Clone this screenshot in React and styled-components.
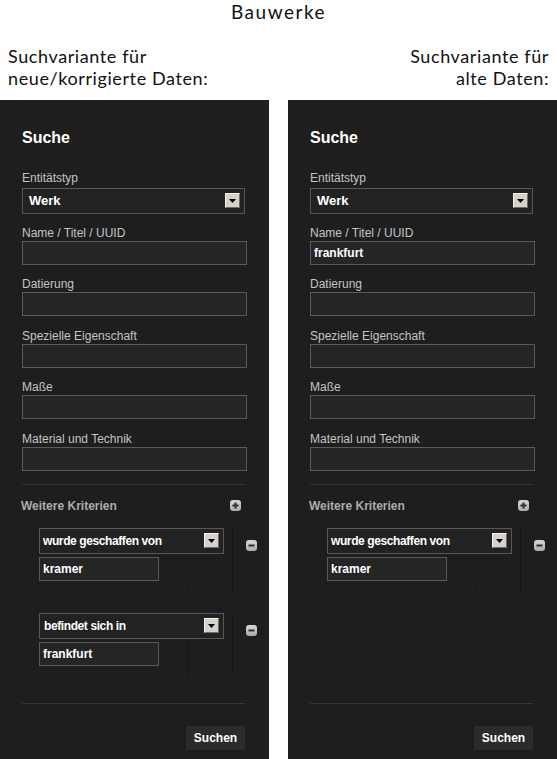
import React from "react";
import styled, { createGlobalStyle } from "styled-components";

const GlobalStyle = createGlobalStyle`
  html, body {
    margin: 0;
    padding: 0;
    background: #ffffff;
  }
  body {
    font-family: "Liberation Sans", Arial, sans-serif;
    overflow: hidden;
  }
`;

const Page = styled.div`
  width: 557px;
  height: 759px;
  display: flex;
  flex-direction: column;
`;

const Header = styled.header`
  height: 100px;
  display: flex;
  flex-direction: column;
  font-family: Lato, "DejaVu Sans", sans-serif;
  color: #111;
`;

const Title = styled.h1`
  margin: 1px 0 0;
  font-size: 19px;
  font-weight: 400;
  line-height: 22px;
  letter-spacing: 1.5px;
  text-align: center;
`;

const Intro = styled.div`
  display: flex;
  justify-content: space-between;
  margin-top: 22px;
  padding: 0 8px 0 8px;
`;

const IntroText = styled.p`
  margin: 0;
  font-size: 18px;
  line-height: 22px;
  letter-spacing: 0.6px;
  text-align: ${(p) => (p.$right ? "right" : "left")};
`;

const Panels = styled.div`
  display: grid;
  grid-template-columns: 269px 269px;
  column-gap: 19px;
  flex: 1;
`;

const Panel = styled.section`
  background: #1e1e1e;
  padding: 29px 24px 0 22px;
  display: flex;
  flex-direction: column;
`;

const Heading = styled.h2`
  margin: 0;
  font-size: 16px;
  font-weight: 700;
  line-height: 18px;
  color: #ffffff;
`;

const Field = styled.div`
  display: flex;
  flex-direction: column;
  margin-top: ${(p) => p.$gap || "12px"};
`;

const Label = styled.label`
  font-size: 12px;
  line-height: 15px;
  color: #c4c4c4;
`;

const SelectBox = styled.div`
  box-sizing: border-box;
  width: ${(p) => p.$width}px;
  height: 26px;
  flex: none;
  margin-top: ${(p) => p.$top || 0}px;
  border: 1px solid #575757;
  background: #222222;
  display: flex;
  align-items: center;
  justify-content: space-between;
  padding: 0 4px 0 ${(p) => p.$pad}px;
  color: #ffffff;
  font-size: ${(p) => p.$size}px;
  font-weight: 700;
  letter-spacing: ${(p) => p.$spacing || 0}px;
`;

const ArrowButton = styled.span`
  box-sizing: border-box;
  width: 15px;
  height: 15px;
  background: #d6d2ca;
  border-top: 1px solid #f4f2ee;
  border-left: 1px solid #f4f2ee;
  border-right: 1px solid #6f6d69;
  border-bottom: 1px solid #6f6d69;
  display: flex;
  align-items: center;
  justify-content: center;
`;

const TextInput = styled.div`
  box-sizing: border-box;
  width: ${(p) => p.$width}px;
  height: 24px;
  flex: none;
  border: 1px solid #5a5a5a;
  background: #252525;
  padding: 1px 3px 0;
  display: flex;
  align-items: center;
  color: #ffffff;
  font-size: 12px;
  font-weight: 700;
`;

const Dotted = styled.div`
  width: 223px;
  margin-top: ${(p) => p.$top}px;
  border-top: 1px dotted #4a4a4a;
`;

const MoreRow = styled.div`
  display: flex;
  align-items: center;
  justify-content: space-between;
  margin: 14px 4px 0 -1px;
`;

const MoreTitle = styled.span`
  font-size: 12px;
  font-weight: 700;
  line-height: 14px;
  color: #acacac;
`;

const CriteriaList = styled.div`
  height: 175px;
  margin-top: 15px;
  padding-left: 17px;
  display: flex;
  flex-direction: column;
  gap: 23px;
`;

const Criterion = styled.div`
  display: flex;
  height: 62px;
`;

const CriterionFields = styled.div`
  flex: none;
  width: 193px;
  border-right: 1px solid #131313;
  display: flex;
  flex-direction: column;
  gap: 3px;
`;

const InputRow = styled.div`
  display: flex;
  align-items: flex-start;
`;

const Trail = styled.span`
  flex: none;
  width: 29px;
  height: ${(p) => p.$height}px;
  margin-top: ${(p) => p.$top}px;
  border-right: 1px solid #151515;
`;

const RemoveSlot = styled.div`
  flex: none;
  padding: 9px 0 0 13px;
`;

const Footer = styled.div`
  display: flex;
  justify-content: flex-end;
  margin-top: 22px;
`;

const SearchButton = styled.button`
  width: 59px;
  height: 24px;
  border: 0;
  padding: 1px 0 0;
  background: #2b2b2b;
  color: #ffffff;
  font-family: "Liberation Sans", Arial, sans-serif;
  font-size: 12px;
  font-weight: 700;
`;

function Arrow() {
  return (
    <ArrowButton>
      <svg width="7" height="4" viewBox="0 0 7 4">
        <path d="M0 0h7L3.5 4z" fill="#000" />
      </svg>
    </ArrowButton>
  );
}

function RoundIcon({ plus }) {
  const id = plus ? "gp" : "gm";
  return (
    <svg width="11" height="11" viewBox="0 0 11 11">
      <defs>
        <linearGradient id={id} x1="0" y1="0" x2="0" y2="1">
          <stop offset="0" stopColor="#d8d8d8" />
          <stop offset="1" stopColor="#a9a9a9" />
        </linearGradient>
      </defs>
      <rect x="0" y="0" width="11" height="11" rx="3" fill={`url(#${id})`} />
      <rect x="2.5" y="4.5" width="6" height="2" fill="#2e2e2e" />
      {plus && <rect x="4.5" y="2.5" width="2" height="6" fill="#2e2e2e" />}
    </svg>
  );
}

const fields = [
  "Name / Titel / UUID",
  "Datierung",
  "Spezielle Eigenschaft",
  "Maße",
  "Material und Technik",
];

function SearchPanel({ nameValue, criteria }) {
  return (
    <Panel>
      <Heading>Suche</Heading>
      <Field $gap="23.5px">
        <Label>Entitätstyp</Label>
        <SelectBox $width={223} $pad={6} $size={13} $top={2}>
          <span>Werk</span>
          <Arrow />
        </SelectBox>
      </Field>
      {fields.map((f, i) => (
        <Field key={f} $gap={i === 0 ? "12px" : "12.5px"}>
          <Label>{f}</Label>
          <TextInput $width={225}>{i === 0 ? nameValue : ""}</TextInput>
        </Field>
      ))}
      <Dotted $top={13} />
      <MoreRow>
        <MoreTitle>Weitere Kriterien</MoreTitle>
        <RoundIcon plus />
      </MoreRow>
      <CriteriaList>
        {criteria.map((c) => (
          <Criterion key={c.relation}>
            <CriterionFields>
              <SelectBox $width={185} $pad={c.pad} $size={12} $spacing={-0.4}>
                <span>{c.relation}</span>
                <Arrow />
              </SelectBox>
              <InputRow>
                <TextInput $width={120}>{c.value}</TextInput>
                <Trail $top={c.trailTop} $height={c.trailHeight} />
              </InputRow>
            </CriterionFields>
            <RemoveSlot>
              <RoundIcon />
            </RemoveSlot>
          </Criterion>
        ))}
      </CriteriaList>
      <Dotted $top={0} />
      <Footer>
        <SearchButton>Suchen</SearchButton>
      </Footer>
    </Panel>
  );
}

const first = {
  relation: "wurde geschaffen von",
  value: "kramer",
  pad: 3,
  trailTop: 31,
  trailHeight: 4,
};

const second = {
  relation: "befindet sich in",
  value: "frankfurt",
  pad: 4,
  trailTop: -2,
  trailHeight: 37,
};

export default function App() {
  return (
    <Page>
      <GlobalStyle />
      <Header>
        <Title>Bauwerke</Title>
        <Intro>
          <IntroText>
            Suchvariante für
            <br />
            neue/korrigierte Daten:
          </IntroText>
          <IntroText $right>
            Suchvariante für
            <br />
            alte Daten:
          </IntroText>
        </Intro>
      </Header>
      <Panels>
        <SearchPanel nameValue="" criteria={[first, second]} />
        <SearchPanel nameValue="frankfurt" criteria={[first]} />
      </Panels>
    </Page>
  );
}
